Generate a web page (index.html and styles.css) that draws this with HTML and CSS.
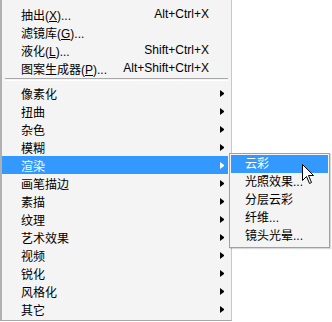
FILE: index.html
```html
<!DOCTYPE html>
<html lang="zh-CN">

<head>
    <meta charset="utf-8">
    <title>滤镜菜单</title>
    <link rel="stylesheet" href="styles.css">
</head>

<body>
    <div class="menu">
        <div class="item"><span class="label">抽出(<u>X</u>)...</span><span class="key">Alt+Ctrl+X</span><span class="arrow"></span></div>
        <div class="item"><span class="label">滤镜库(<u>G</u>)...</span><span class="arrow"></span></div>
        <div class="item"><span class="label">液化(<u>L</u>)...</span><span class="key">Shift+Ctrl+X</span><span class="arrow"></span></div>
        <div class="item"><span class="label">图案生成器(<u>P</u>)...</span><span class="key">Alt+Shift+Ctrl+X</span><span class="arrow"></span></div>
        <div class="sep"></div>
        <div class="item"><span class="label">像素化</span><span class="arrow sub"></span></div>
        <div class="item"><span class="label">扭曲</span><span class="arrow sub"></span></div>
        <div class="item"><span class="label">杂色</span><span class="arrow sub"></span></div>
        <div class="item"><span class="label">模糊</span><span class="arrow sub"></span></div>
        <div class="item active"><span class="label">渲染</span><span class="arrow sub"></span></div>
        <div class="item"><span class="label">画笔描边</span><span class="arrow sub"></span></div>
        <div class="item"><span class="label">素描</span><span class="arrow sub"></span></div>
        <div class="item"><span class="label">纹理</span><span class="arrow sub"></span></div>
        <div class="item"><span class="label">艺术效果</span><span class="arrow sub"></span></div>
        <div class="item"><span class="label">视频</span><span class="arrow sub"></span></div>
        <div class="item"><span class="label">锐化</span><span class="arrow sub"></span></div>
        <div class="item"><span class="label">风格化</span><span class="arrow sub"></span></div>
        <div class="item"><span class="label">其它</span><span class="arrow sub"></span></div>
    </div>

    <div class="submenu">
        <div class="sub-item active">云彩</div>
        <div class="sub-item">光照效果...</div>
        <div class="sub-item">分层云彩</div>
        <div class="sub-item">纤维...</div>
        <div class="sub-item">镜头光晕...</div>
    </div>

    <svg class="cursor" width="13" height="21" viewBox="0 0 13 21">
        <path d="M0.5 0.5 L0.5 16.5 L4.5 12.5 L7.5 19.5 L9.5 18.5 L6.5 11.5 L11.5 11.5 Z" fill="#fff" stroke="#000" stroke-width="1" />
    </svg>
</body>

</html>
```

FILE: styles.css
```css
* {
    margin: 0px;
    padding: 0px;
    box-sizing: border-box;
}

body {
    background: #fff;
    font-family: "Liberation Sans", "Noto Sans CJK SC", sans-serif;
    font-size: 12px;
    color: #000;
}

.menu {
    width: 232px;
    height: 321px;
    padding-top: 5px;
    background: #f4f4f4;
    border-left: 2px solid #b0b0b0;
    border-right: 1px solid #c8c8c8;
    border-bottom: 1px solid #a8a8a8;
}

.item {
    display: flex;
    align-items: center;
    height: 18px;
    padding-left: 19px;
    padding-right: 4px;
    margin-right: 3px;
}

.item .label {
    flex: 1;
    white-space: nowrap;
}

.item .key {
    margin-right: 11px;
}

.item .arrow {
    width: 4px;
    height: 7px;
}

.item .arrow.sub {
    border-left: 4px solid #000;
    border-top: 3.5px solid transparent;
    border-bottom: 3.5px solid transparent;
}

.item.active {
    background: #3399ff;
    color: #fff;
}

.item.active .arrow.sub {
    border-left-color: #fff;
}

.sep {
    height: 1px;
    margin: 1px 3px 3px 3px;
    border-top: 1px solid #a8a8a8;
    border-bottom: 1px solid #fff;
    box-sizing: content-box;
}

.submenu {
    position: absolute;
    left: 229px;
    top: 153px;
    width: 101px;
    padding: 1px 1px 2px 1px;
    background: #f4f4f4;
    border: 1px solid #a0a0a0;
    box-shadow: 1px 1px 1px rgba(0, 0, 0, 0.15);
}

.sub-item {
    height: 18px;
    line-height: 18px;
    padding-left: 14px;
    white-space: nowrap;
}

.sub-item.active {
    background: #3399ff;
    color: #fff;
}

.cursor {
    position: absolute;
    left: 302px;
    top: 164px;
}
```
